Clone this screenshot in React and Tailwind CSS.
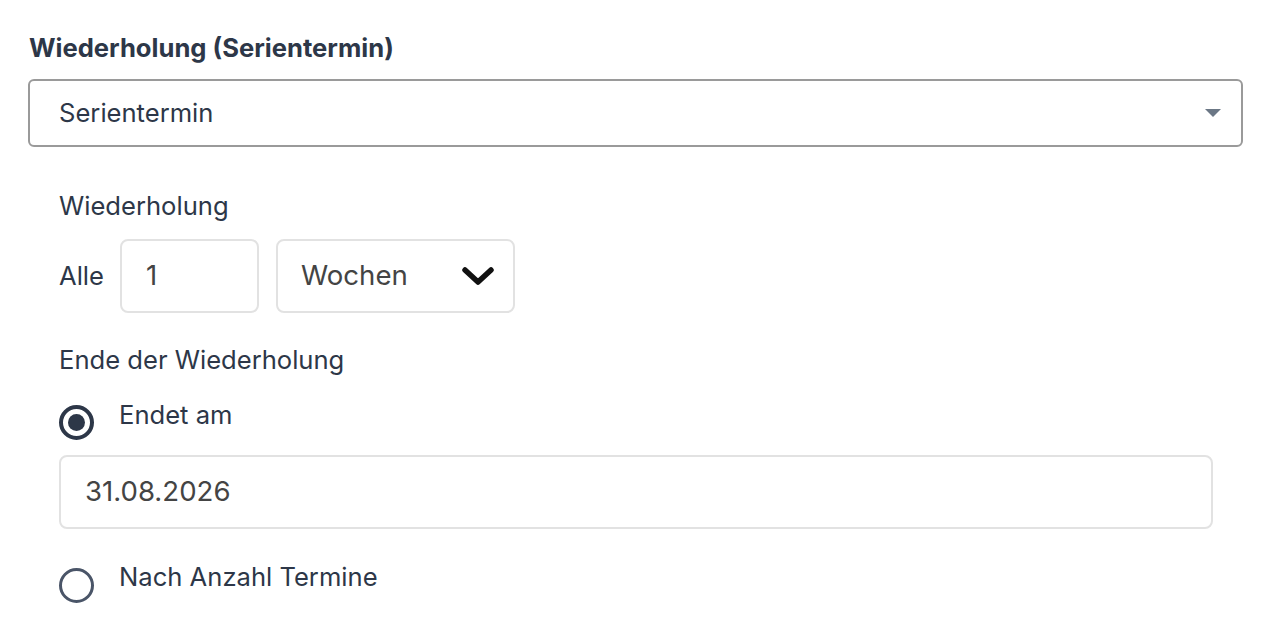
import { useState } from "react";

function Radio({ checked }) {
  return checked ? (
    <span className="flex h-[35px] w-[35px] shrink-0 items-center justify-center rounded-full border-[4px] border-[#2d3748]">
      <span className="h-[17px] w-[17px] rounded-full bg-[#2d3748]" />
    </span>
  ) : (
    <span className="h-[35px] w-[35px] shrink-0 rounded-full border-[3px] border-[#4a5568]" />
  );
}

export default function App() {
  const [mode, setMode] = useState("date");

  return (
    <div className="min-h-screen bg-white pl-[28px] pr-[29px] pt-[32px] text-[#2d3748] [font-family:Inter,'Noto_Sans',sans-serif]">
      <h2 className="pl-[1px] text-[25.6px] font-bold leading-[32px]">Wiederholung (Serientermin)</h2>

      {/* Serientermin select */}
      <div className="mt-[15px] flex h-[68px] items-center justify-between rounded-[6px] border-2 border-[#9a9a9a] pl-[29px] pr-[20px]">
        <span className="text-[25.6px] leading-[32px]">Serientermin</span>
        <svg width="16" height="8" viewBox="0 0 16 8">
          <path d="M0 0 L16 0 L8 8 Z" fill="#6b7785" />
        </svg>
      </div>

      <div className="pl-[31px] pr-[30px]">
        <div className="mt-[43px] text-[25.6px] leading-[32px]">Wiederholung</div>

        <div className="mt-[17px] flex items-center gap-[17px]">
          <span className="-mr-[1px] text-[25.6px] leading-[32px]">Alle</span>
          <div className="flex h-[74px] w-[139px] items-center rounded-[8px] border-2 border-[#e2e2e2] pl-[24px] text-[27.6px] text-[#444]">
            1
          </div>
          <div className="flex h-[74px] w-[239px] items-center justify-between rounded-[8px] border-2 border-[#e2e2e2] pl-[23px] pr-[19px] text-[27.6px] text-[#444]">
            <span>Wochen</span>
            <svg width="32" height="20" viewBox="0 0 32 20">
              <path d="M3 4 L16 16 L29 4" fill="none" stroke="#111" strokeWidth="5.5" strokeLinecap="round" strokeLinejoin="round" />
            </svg>
          </div>
        </div>

        <div className="mt-[31px] text-[25.6px] leading-[32px]">Ende der Wiederholung</div>

        <label className="mt-[29px] flex cursor-pointer items-start gap-[25px]" onClick={() => setMode("date")}>
          <Radio checked={mode === "date"} />
          <span className="-mt-[6px] text-[25.6px] leading-[32px]">Endet am</span>
        </label>

        <div className="mt-[15px] flex h-[74px] items-center rounded-[8px] border-2 border-[#e2e2e2] pl-[24px] text-[27.6px] text-[#444]">
          31.08.2026
        </div>

        <label className="mt-[39px] flex cursor-pointer items-start gap-[25px]" onClick={() => setMode("count")}>
          <Radio checked={mode === "count"} />
          <span className="-mt-[7px] text-[25.6px] leading-[32px]">Nach Anzahl Termine</span>
        </label>
      </div>
    </div>
  );
}
